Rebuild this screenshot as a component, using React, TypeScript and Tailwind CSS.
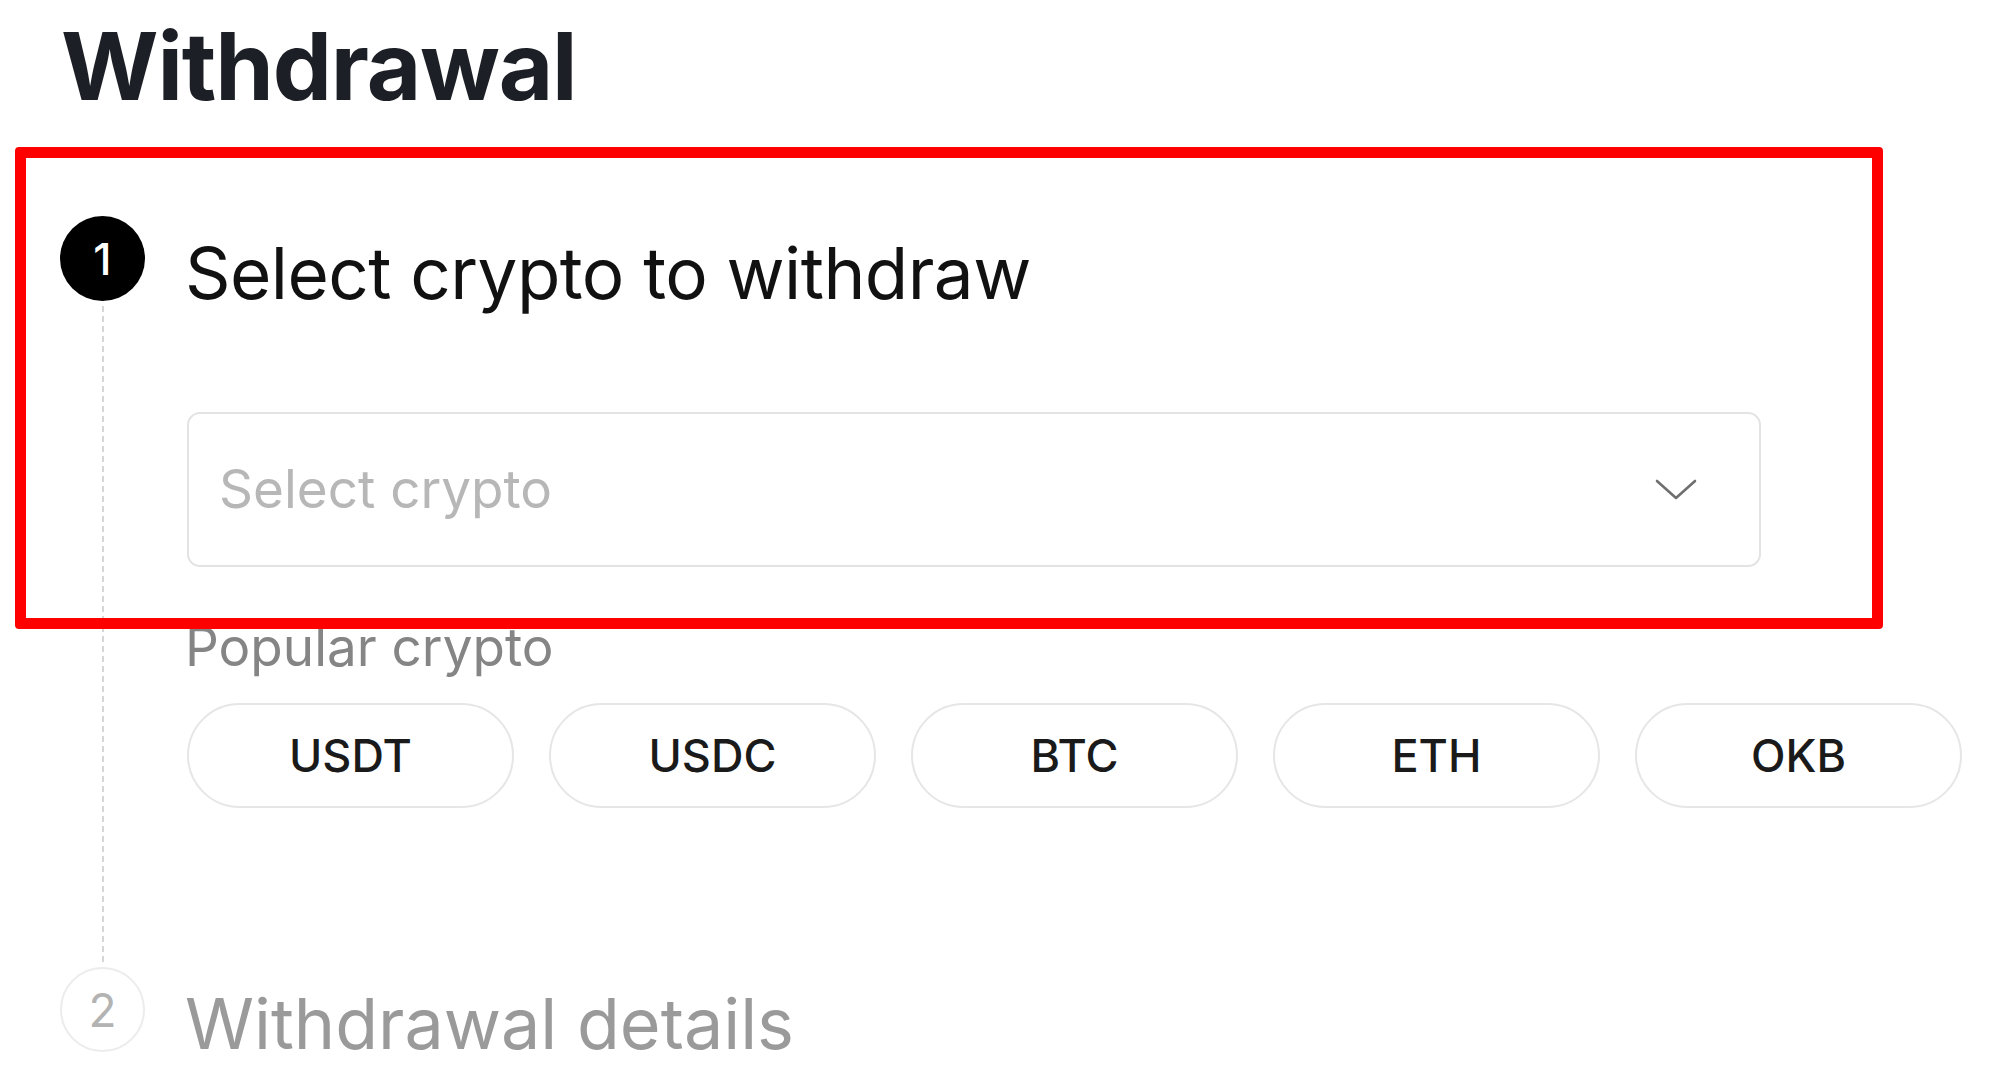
import React from "react";

const popular = ["USDT", "USDC", "BTC", "ETH", "OKB"];

function Chevron() {
  return (
    <svg width="42" height="22" viewBox="0 0 42 22" fill="none">
      <polyline
        points="2,2 21,19 40,2"
        stroke="#6f6f6f"
        strokeWidth="2.6"
        strokeLinecap="round"
        strokeLinejoin="round"
      />
    </svg>
  );
}

function StepOne() {
  return (
    <div className="flex pl-[60px] gap-[40px]">
      <div className="flex flex-col items-center w-[85px] shrink-0">
        <div className="w-[85px] h-[85px] rounded-full bg-black text-white flex items-center justify-center text-[44px] font-medium leading-none">
          1
        </div>
        <div className="flex-1 w-0 border-l-2 border-dashed border-[#d6d6d6] mt-[5px] mb-[5px]" />
      </div>

      <div className="flex flex-col pb-[159px]">
        <h2 className="mt-[15px] text-[71px] leading-[85px] tracking-[-0.008em] text-[#111111]">
          Select crypto to withdraw
        </h2>

        <div className="mt-[96px] ml-[2px] w-[1574px] h-[155px] border-2 border-[#e3e3e3] rounded-[13px] flex items-center justify-between pl-[30px] pr-[62px]">
          <span className="text-[53px] leading-none text-[#b7b7b7]">
            Select crypto
          </span>
          <Chevron />
        </div>

        <span className="mt-[50px] text-[53px] leading-[60px] text-[#858585]">
          Popular crypto
        </span>

        <div className="mt-[26px] ml-[2px] flex gap-[35px]">
          {popular.map((coin) => (
            <button
              key={coin}
              className="w-[327px] h-[105px] rounded-full border-2 border-[#e6e6e6] flex items-center justify-center text-[45px] font-medium text-[#1a1a1a]"
            >
              {coin}
            </button>
          ))}
        </div>
      </div>
    </div>
  );
}

function StepTwo() {
  return (
    <div className="flex pl-[60px] gap-[40px]">
      <div className="w-[85px] h-[85px] shrink-0 rounded-full border-2 border-[#ececec] text-[#b3b3b3] flex items-center justify-center text-[46px] leading-none">
        2
      </div>
      <h2 className="mt-[14px] text-[70px] leading-[85px] text-[#9a9a9a]">
        Withdrawal details
      </h2>
    </div>
  );
}

export default function App() {
  return (
    <div className="relative w-[2000px] h-[1076px] overflow-hidden bg-white font-['Inter',sans-serif]">
      <h1 className="pl-[61px] pt-[19px] text-[94px] leading-[94px] font-bold tracking-[-0.012em] text-[#1c1f26]">
        Withdrawal
      </h1>

      <div className="mt-[103px]">
        <StepOne />
        <StepTwo />
      </div>

      {/* red highlight frame over step 1 */}
      <div className="absolute left-[15px] top-[147px] w-[1868px] h-[482px] border-[11px] border-[#ff0000] rounded-[4px] pointer-events-none" />
    </div>
  );
}
